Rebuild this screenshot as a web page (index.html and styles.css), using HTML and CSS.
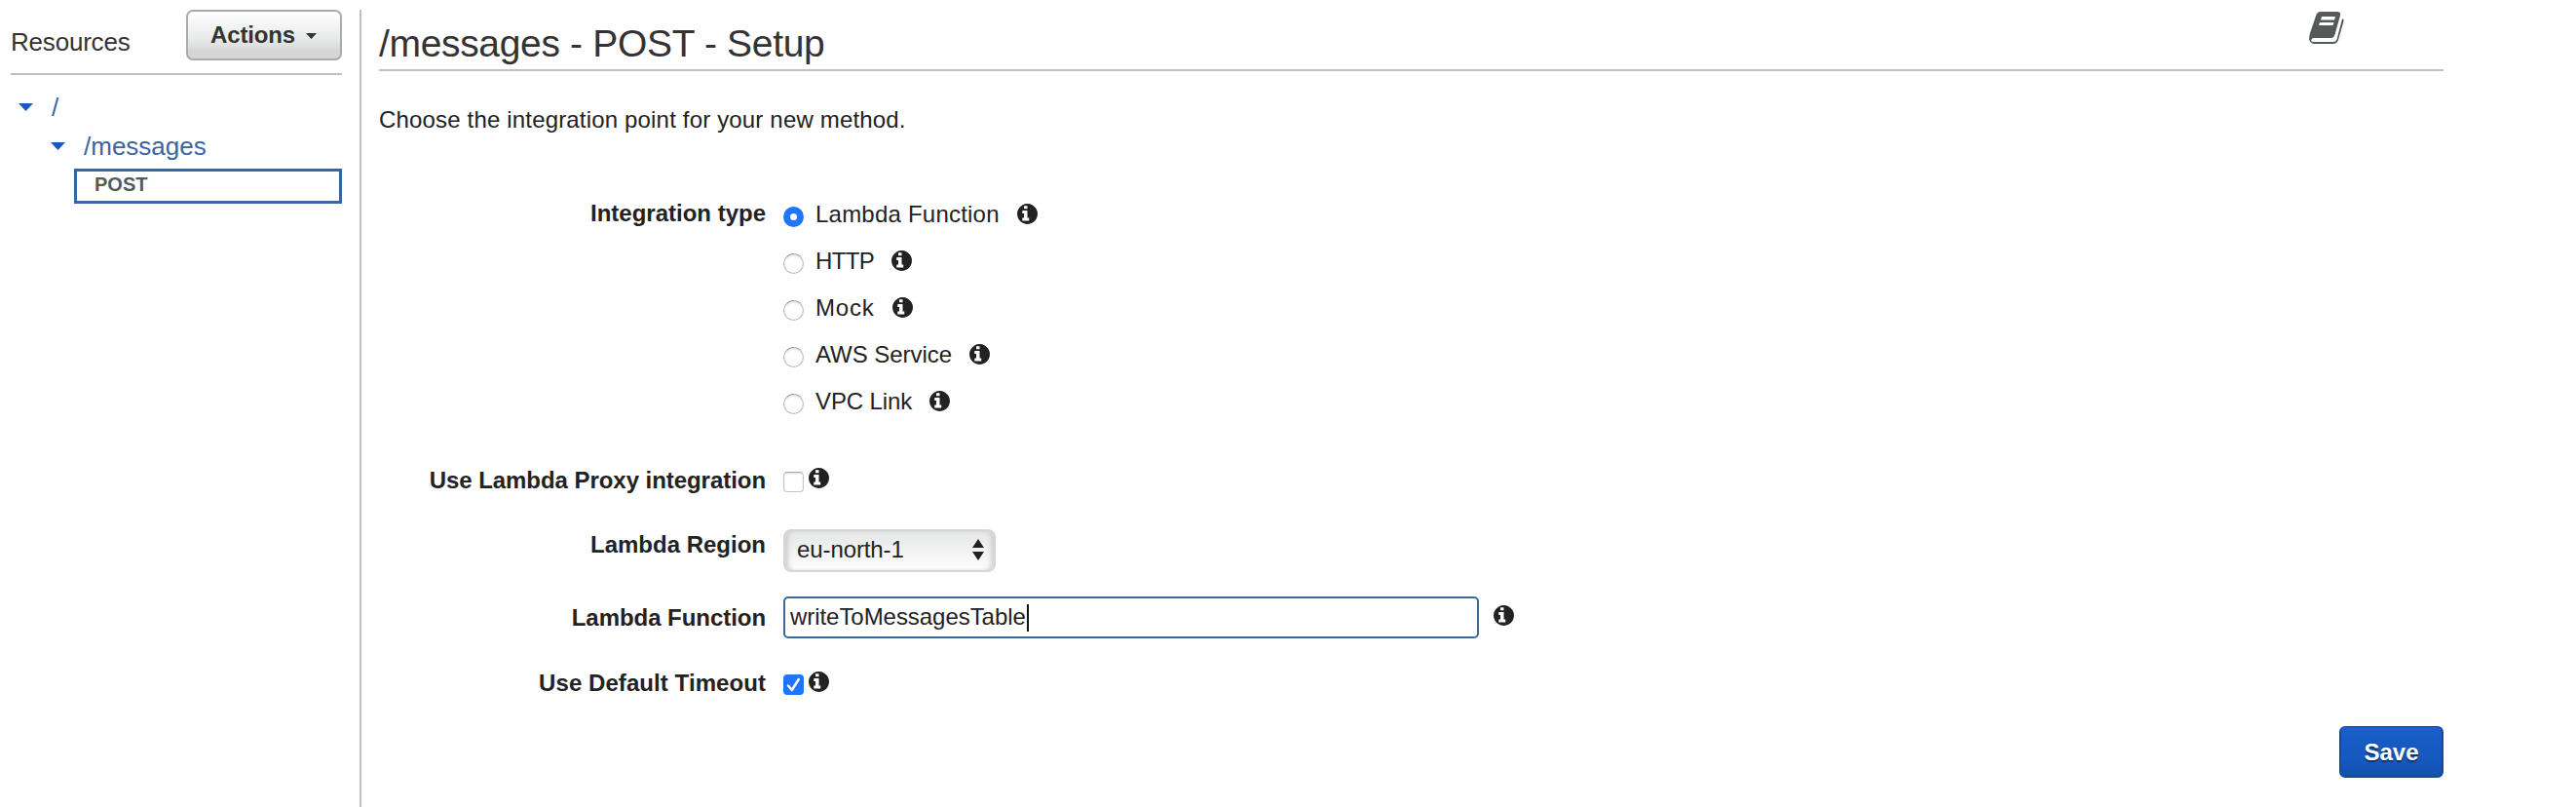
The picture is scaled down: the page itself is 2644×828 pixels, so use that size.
FILE: index.html
```html
<!DOCTYPE html>
<html lang="en">
<head>
<meta charset="utf-8">
<title>/messages - POST - Setup</title>
<link rel="stylesheet" href="styles.css">
</head>
<body>
<svg class="defs" aria-hidden="true">
  <symbol id="info" viewBox="128 128 1536 1536"><path d="M1024 1376v-160q0-14-9-23t-23-9h-96v-512q0-14-9-23t-23-9h-320q-14 0-23 9t-9 23v160q0 14 9 23t23 9h96v320h-96q-14 0-23 9t-9 23v160q0 14 9 23t23 9h448q14 0 23-9t9-23zm-128-896v-160q0-14-9-23t-23-9h-192q-14 0-23 9t-9 23v160q0 14 9 23t23 9h192q14 0 23-9t9-23zm768 416q0 209-103 385.500t-279.500 279.500-385.500 103-385.500-103-279.500-279.500-103-385.500 103-385.500 279.500-279.500 385.500-103 385.500 103 279.500 279.500 103 385.500z"/></symbol>
</svg>
<div class="layout">
  <aside class="sidebar">
    <div class="side-head">
      <span class="side-title">Resources</span>
      <button class="actions">Actions<svg class="caret" viewBox="0 0 11 6"><path d="M0 0h11L5.500 6z"/></svg></button>
    </div>
    <nav class="tree">
      <div class="node"><svg class="tri" viewBox="0 0 15 8"><path d="M0 0h15L7.500 8z"/></svg><a>/</a></div>
      <div class="node child"><svg class="tri" viewBox="0 0 15 8"><path d="M0 0h15L7.500 8z"/></svg><a>/messages</a></div>
      <div class="method">POST</div>
    </nav>
  </aside>
  <main class="main">
    <header class="head">
      <h1>/messages - POST - Setup</h1>
      <svg class="book" viewBox="0 0 36 34"><path class="cover" fill-rule="evenodd" d="M12 0H29.500Q33 .5 32 4L26.500 23.500Q25.500 27 22.500 27H5Q2.500 27 2 30Q3 31 5 31H25Q27.500 31 28.500 28.500L34 7.500H35.500V10L30 29Q28.500 33 25 33H5Q0 32 0 27L1 22L7.500 3Q8.500 0 12 0zM13 5L12 8.500H26L27 5zM11 11L10 14H24.500L25.500 11z"/></svg>
    </header>
    <p class="intro">Choose the integration point for your new method.</p>
    <form class="form">
      <div class="row type">
        <span class="label">Integration type</span>
        <div class="options">
          <label class="option"><span class="radio on"></span><span class="text lambda">Lambda Function</span><svg class="info"><use href="#info"/></svg></label>
          <label class="option"><span class="radio"></span><span class="text http">HTTP</span><svg class="info"><use href="#info"/></svg></label>
          <label class="option"><span class="radio"></span><span class="text mock">Mock</span><svg class="info"><use href="#info"/></svg></label>
          <label class="option"><span class="radio"></span><span class="text aws">AWS Service</span><svg class="info"><use href="#info"/></svg></label>
          <label class="option"><span class="radio"></span><span class="text vpc">VPC Link</span><svg class="info"><use href="#info"/></svg></label>
        </div>
      </div>
      <div class="row proxy">
        <span class="label">Use Lambda Proxy integration</span>
        <div class="control"><span class="check"></span><svg class="info"><use href="#info"/></svg></div>
      </div>
      <div class="row region">
        <span class="label">Lambda Region</span>
        <div class="select"><span>eu-north-1</span><svg class="arrows" viewBox="0 0 12 22"><path d="M0 9L6 0l6 9zM0 13h12l-6 9z"/></svg></div>
      </div>
      <div class="row function">
        <span class="label">Lambda Function</span>
        <div class="control"><div class="input"><span>writeToMessagesTable</span><i class="cursor"></i></div><svg class="info"><use href="#info"/></svg></div>
      </div>
      <div class="row timeout">
        <span class="label">Use Default Timeout</span>
        <div class="control"><span class="check on"><svg viewBox="0 0 21 21"><path d="M5 11.500L8.800 16L15.800 5"/></svg></span><svg class="info"><use href="#info"/></svg></div>
      </div>
    </form>
    <button class="save">Save</button>
  </main>
</div>
</body>
</html>
```
FILE: styles.css
```css
* { box-sizing: border-box; }
body {
  margin: 0;
  background: #fff;
  color: #222;
  font: 24px/28px "Liberation Sans", Arial, sans-serif;
  overflow: hidden;
}
.defs { display: none; }
button { font: inherit; }
svg { display: block; flex: none; }

.layout { display: flex; height: 828px; padding-top: 10px; }

/* Sidebar */
.sidebar { width: 371px; padding: 0 18px 0 11px; border-right: 2px solid #c0c0c0; }
.side-head {
  display: flex;
  justify-content: space-between;
  align-items: flex-start;
  height: 67px;
  border-bottom: 2px solid #c0c0c0;
}
.side-title { padding-top: 19px; color: #333; font-size: 26px; letter-spacing: -0.2px; }
.actions {
  display: flex;
  align-items: center;
  justify-content: flex-start;
  gap: 11px;
  width: 160px;
  height: 52px;
  padding: 0 0 0 23px;
  border: 2px solid #aaa;
  border-radius: 7px;
  background: linear-gradient(#fff, #e7e9e9 60%, #d6d6d6 85%);
  color: #333;
  font-weight: bold;
  letter-spacing: -0.15px;
}
.caret { width: 11px; height: 6px; margin-top: 2px; fill: #333; }
.tree { padding-top: 13px; }
.node { display: flex; align-items: center; gap: 19px; height: 40px; padding-left: 8px; color: #3a669f; font-size: 26px; }
.node.child { padding-left: 41px; }
.tri { width: 15px; height: 8px; fill: #1659bf; }
.method {
  height: 36px;
  margin: 3px 0 0 65px;
  padding-left: 18px;
  border: 3px solid #3a669f;
  color: #545b57;
  font-size: 20px;
  font-weight: bold;
  line-height: 27px;
}

/* Main panel */
.main { display: flex; flex-direction: column; width: 2137px; padding-left: 18px; }
.head { display: flex; justify-content: space-between; height: 63px; border-bottom: 2px solid #c0c0c0; padding-right: 102px; }
h1 { margin: 11px 0 0; color: #333; font-size: 39px; line-height: 48px; font-weight: normal; letter-spacing: -0.33px; }
.book { width: 36px; height: 34px; margin-top: 2px; fill: #545b57; }
.intro { margin: 36px 0 0; letter-spacing: 0.17px; }
.form { margin-top: 59px; }
.row { display: grid; grid-template-columns: 397px 1fr; column-gap: 18px; }
.label { text-align: right; font-weight: bold; }
.control { display: flex; align-items: center; }
.info { width: 21px; height: 21px; fill: #222; }

.type .label { line-height: 46px; }
.option { display: flex; align-items: center; height: 48px; }
.option .text { margin: 0 18px 0 12px; }
.option .info { margin-bottom: 1px; }
.lambda { letter-spacing: 0.22px; }
.http { letter-spacing: -0.6px; }
.mock { letter-spacing: 0.8px; }
.aws { letter-spacing: -0.05px; }
.vpc { letter-spacing: -0.1px; }
.radio {
  width: 21px;
  height: 21px;
  margin-top: 5px;
  border: 1px solid #bbb;
  border-top-color: #999;
  border-radius: 50%;
  box-shadow: inset 0 1px 2px #ddd;
}
.radio.on { border: 7px solid #1f75fe; box-shadow: none; }

.check {
  width: 21px;
  height: 21px;
  margin-right: 5px;
  border: 1px solid #c4c4c4;
  border-top-color: #a5a5a5;
  border-radius: 4px;
  box-shadow: inset 0 1px 2px #ddd;
}
.check.on { border: 0; background: #1f75fe; box-shadow: none; }
.check path { fill: none; stroke: #fff; stroke-width: 2.5; stroke-linecap: round; stroke-linejoin: round; }

.proxy { height: 50px; margin-top: 32px; line-height: 50px; }
.proxy .label { letter-spacing: -0.05px; }
.proxy .check { margin-top: 3px; }
.proxy .info { margin-bottom: 5px; }

.region { height: 44px; margin-top: 25px; }
.region .label { line-height: 31px; }
.select {
  display: flex;
  align-items: center;
  justify-content: space-between;
  width: 218px;
  height: 44px;
  padding: 0 10px 2px 12px;
  border: 2px solid #d6d6d6;
  border-radius: 8px;
  background: linear-gradient(#e5e7e6, #fdfdfd);
  box-shadow: inset 5px 0 5px -2px #cfcfcf, inset -5px 0 5px -2px #cfcfcf;
}
.select span { letter-spacing: -0.1px; }
.arrows { width: 12px; height: 22px; fill: #222; }

.function { height: 43px; margin-top: 25px; line-height: 43px; }
.function .label { letter-spacing: -0.05px; }
.input {
  display: flex;
  align-items: center;
  width: 714px;
  height: 43px;
  margin-right: 15px;
  padding: 0 5px;
  border: 2px solid #3a669f;
  border-radius: 5px;
  line-height: 39px;
}
.input span { margin-top: -2px; letter-spacing: -0.05px; }
.cursor { width: 2px; height: 28px; margin-left: 1px; background: #111; }
.function .info { margin-bottom: 4px; }

.timeout { height: 41px; margin-top: 25px; line-height: 41px; }
.timeout .label { letter-spacing: 0.07px; }
.timeout .check { margin-top: 4px; }
.timeout .info { margin-bottom: 2px; }

.save {
  align-self: flex-end;
  width: 107px;
  height: 53px;
  margin-top: 24px;
  padding: 1px 0 0;
  border: 1px solid #134a9f;
  border-width: 1px 2px 2px;
  border-radius: 6px;
  background: linear-gradient(#1b60cc, #1659bf 40%, #1659bf 65%, #1450ae);
  color: #fff;
  font-weight: bold;
  text-shadow: 0 2px 1px #143257;
}
```
